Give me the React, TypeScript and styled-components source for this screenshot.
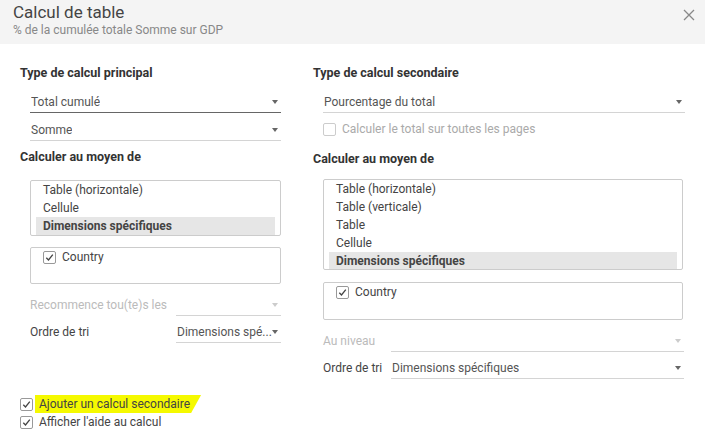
import styled, { createGlobalStyle } from "styled-components";

const GlobalStyle = createGlobalStyle`
  html, body {
    margin: 0;
    padding: 0;
    background: #fff;
  }
  body {
    font-family: Roboto, "Liberation Sans", Arial, sans-serif;
    font-size: 12px;
    color: #333;
  }
`;

const Dialog = styled.div`
  width: 705px;
  height: 435px;
  background: #fff;
  overflow: hidden;
`;

const Header = styled.div`
  height: 44px;
  background: #f4f4f4;
  padding: 2px 13px 0;
  box-sizing: border-box;
  display: flex;
  justify-content: space-between;
  align-items: flex-start;
`;

const Titles = styled.div`
  display: flex;
  flex-direction: column;
`;

const Title = styled.div`
  font-size: 17px;
  line-height: 20px;
  color: #444;
`;

const Subtitle = styled.div`
  font-size: 12px;
  line-height: 14px;
  margin-top: 1px;
  color: #888;
`;

const CloseButton = styled.button`
  border: 0;
  background: transparent;
  padding: 0;
  margin: 5px -5px 0 0;
  width: 16px;
  height: 16px;
  display: flex;
  align-items: center;
  justify-content: center;
  cursor: pointer;

  & svg {
    width: 12px;
    height: 12px;
    stroke: #888;
    stroke-width: 1.3;
  }
`;

const Body = styled.div`
  padding: 21px 20px 0;
`;

const Columns = styled.div`
  display: grid;
  grid-template-columns: 261px 1fr;
  column-gap: 32px;
  align-items: start;
`;

const Column = styled.div`
  display: flex;
  flex-direction: column;
`;

const Heading = styled.div<{ $gap?: number }>`
  font-weight: 700;
  font-size: 12.5px;
  line-height: 16px;
  color: #333;
  margin-top: ${(p) => p.$gap ?? 0}px;
`;

const Indented = styled.div<{ $gap: number; $right?: number }>`
  margin: ${(p) => p.$gap}px ${(p) => p.$right ?? 0}px 0 10px;
`;

const Select = styled.div<{ $active?: boolean; $disabled?: boolean }>`
  height: 21px;
  display: flex;
  align-items: center;
  justify-content: space-between;
  padding: 0 3px 0 1px;
  border-bottom: 1px solid ${(p) => (p.$active ? "#666" : "#d4d4d4")};
  color: ${(p) => (p.$disabled ? "#bbb" : "#555")};
  white-space: nowrap;

  & svg {
    width: 6px;
    height: 4px;
    flex: none;
    fill: ${(p) => (p.$disabled ? "#ccc" : "#666")};
  }
`;

const SelectText = styled.span`
  overflow: hidden;
  text-overflow: ellipsis;
`;

const ListBox = styled.div<{ $height: number }>`
  height: ${(p) => p.$height}px;
  border: 1px solid #ccc;
  border-radius: 2px;
  box-sizing: border-box;
  padding: 0 5px;
  overflow: hidden;
`;

const ListItem = styled.div<{ $selected?: boolean }>`
  line-height: 18px;
  padding-left: 7px;
  color: #444;
  background: ${(p) => (p.$selected ? "#e6e6e6" : "transparent")};
  font-weight: ${(p) => (p.$selected ? 700 : 400)};
`;

const FieldBox = styled.div<{ $height: number; $pad: number }>`
  height: ${(p) => p.$height}px;
  border: 1px solid #ccc;
  border-radius: 2px;
  box-sizing: border-box;
  padding: 0 ${(p) => p.$pad}px;
`;

const CheckRow = styled.label<{ $disabled?: boolean }>`
  display: flex;
  align-items: center;
  gap: 6px;
  line-height: 18px;
  color: ${(p) => (p.$disabled ? "#aaa" : "#444")};
`;

const Box = styled.span<{ $disabled?: boolean }>`
  width: 13px;
  height: 13px;
  box-sizing: border-box;
  border: 1px solid ${(p) => (p.$disabled ? "#ccc" : "#999")};
  border-radius: 2px;
  display: flex;
  align-items: center;
  justify-content: center;
  flex: none;
  background: #fff;

  & svg {
    width: 9px;
    height: 9px;
    stroke: #444;
    stroke-width: 1.3;
    fill: none;
  }
`;

const FieldRow = styled.div<{ $label: number }>`
  display: grid;
  grid-template-columns: ${(p) => p.$label}px 1fr;
  align-items: center;
`;

const FieldLabel = styled.span<{ $disabled?: boolean }>`
  color: ${(p) => (p.$disabled ? "#bbb" : "#444")};
  white-space: nowrap;
`;

const Footer = styled.div`
  margin-top: 16px;
  display: flex;
  flex-direction: column;
`;

const Highlight = styled.span`
  background: #f5f900;
  margin-left: -4px;
  padding: 0 11px 0 4px;
  clip-path: polygon(0 0, 100% 0, 94% 100%, 0 100%);
`;

const Arrow = () => (
  <svg viewBox="0 0 6 4">
    <path d="M0 0h6L3 4z" />
  </svg>
);

const Check = () => (
  <svg viewBox="0 0 9 9">
    <path d="M1.3 4.8l2.2 2.2L7.8 1.6" />
  </svg>
);

export default function App() {
  return (
    <Dialog>
      <GlobalStyle />
      <Header>
        <Titles>
          <Title>Calcul de table</Title>
          <Subtitle>% de la cumulée totale Somme sur GDP</Subtitle>
        </Titles>
        <CloseButton aria-label="Fermer">
          <svg viewBox="0 0 12 12">
            <path d="M1 1l10 10M11 1L1 11" />
          </svg>
        </CloseButton>
      </Header>
      <Body>
        <Columns>
          <Column>
            <Heading>Type de calcul principal</Heading>
            <Indented $gap={10}>
              <Select $active>
                <SelectText>Total cumulé</SelectText>
                <Arrow />
              </Select>
            </Indented>
            <Indented $gap={6}>
              <Select>
                <SelectText>Somme</SelectText>
                <Arrow />
              </Select>
            </Indented>
            <Heading $gap={8}>Calculer au moyen de</Heading>
            <Indented $gap={15}>
              <ListBox $height={56}>
                <ListItem>Table (horizontale)</ListItem>
                <ListItem>Cellule</ListItem>
                <ListItem $selected>Dimensions spécifiques</ListItem>
              </ListBox>
            </Indented>
            <Indented $gap={11}>
              <FieldBox $height={37} $pad={12}>
                <CheckRow>
                  <Box>
                    <Check />
                  </Box>
                  Country
                </CheckRow>
              </FieldBox>
            </Indented>
            <Indented $gap={10}>
              <FieldRow $label={146}>
                <FieldLabel $disabled>Recommence tou(te)s les</FieldLabel>
                <Select $disabled>
                  <SelectText />
                  <Arrow />
                </Select>
              </FieldRow>
            </Indented>
            <Indented $gap={5}>
              <FieldRow $label={146}>
                <FieldLabel>Ordre de tri</FieldLabel>
                <Select>
                  <SelectText>Dimensions spé...</SelectText>
                  <Arrow />
                </Select>
              </FieldRow>
            </Indented>
          </Column>
          <Column>
            <Heading>Type de calcul secondaire</Heading>
            <Indented $gap={10}>
              <Select>
                <SelectText>Pourcentage du total</SelectText>
                <Arrow />
              </Select>
            </Indented>
            <Indented $gap={7}>
              <CheckRow $disabled>
                <Box $disabled />
                Calculer le total sur toutes les pages
              </CheckRow>
            </Indented>
            <Heading $gap={13}>Calculer au moyen de</Heading>
            <Indented $gap={12} $right={2}>
              <ListBox $height={91}>
                <ListItem>Table (horizontale)</ListItem>
                <ListItem>Table (verticale)</ListItem>
                <ListItem>Table</ListItem>
                <ListItem>Cellule</ListItem>
                <ListItem $selected>Dimensions spécifiques</ListItem>
              </ListBox>
            </Indented>
            <Indented $gap={12} $right={2}>
              <FieldBox $height={38} $pad={12}>
                <CheckRow>
                  <Box>
                    <Check />
                  </Box>
                  Country
                </CheckRow>
              </FieldBox>
            </Indented>
            <Indented $gap={10} $right={1}>
              <FieldRow $label={68}>
                <FieldLabel $disabled>Au niveau</FieldLabel>
                <Select $disabled>
                  <SelectText />
                  <Arrow />
                </Select>
              </FieldRow>
            </Indented>
            <Indented $gap={5} $right={1}>
              <FieldRow $label={68}>
                <FieldLabel>Ordre de tri</FieldLabel>
                <Select>
                  <SelectText>Dimensions spécifiques</SelectText>
                  <Arrow />
                </Select>
              </FieldRow>
            </Indented>
          </Column>
        </Columns>
        <Footer>
          <CheckRow>
            <Box>
              <Check />
            </Box>
            <Highlight>Ajouter un calcul secondaire</Highlight>
          </CheckRow>
          <CheckRow>
            <Box>
              <Check />
            </Box>
            Afficher l'aide au calcul
          </CheckRow>
        </Footer>
      </Body>
    </Dialog>
  );
}
